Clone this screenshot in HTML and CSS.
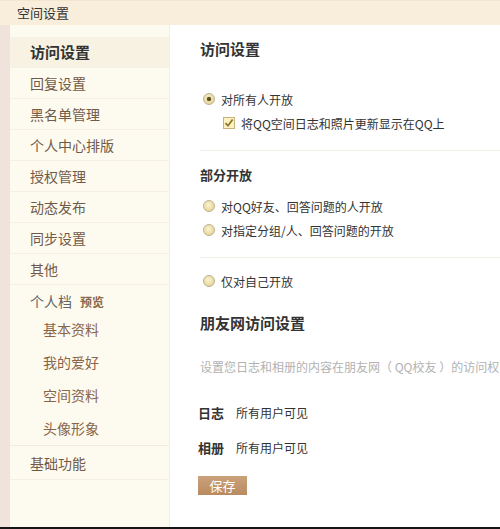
FILE: index.html
```html
<!DOCTYPE html>
<html lang="zh-CN">
<head>
<meta charset="utf-8">
<title>空间设置</title>
<link rel="stylesheet" href="styles.css">
</head>
<body>
<div class="page">
  <header class="top">空间设置</header>
  <div class="main">
    <aside class="side">
      <div class="item active">访问设置</div>
      <div class="item">回复设置</div>
      <div class="item">黑名单管理</div>
      <div class="item">个人中心排版</div>
      <div class="item">授权管理</div>
      <div class="item">动态发布</div>
      <div class="item">同步设置</div>
      <div class="item">其他</div>
      <div class="group">
        <div class="group-head">个人档<span class="preview">预览</span></div>
        <div class="sub">基本资料</div>
        <div class="sub">我的爱好</div>
        <div class="sub">空间资料</div>
        <div class="sub">头像形象</div>
      </div>
      <div class="item last">基础功能</div>
    </aside>
    <section class="content">
      <h2 class="title">访问设置</h2>
      <div class="row mt29"><span class="radio on"></span>对所有人开放</div>
      <div class="row cbrow mt4"><span class="check"><svg width="10" height="10" viewBox="0 0 10 10"><path d="M1.5 5.2 L4 7.8 L8.6 1.6" fill="none" stroke="#8a7420" stroke-width="1.7"/></svg></span>将QQ空间日志和照片更新显示在QQ上</div>
      <div class="rule mt17"></div>
      <h3 class="sub-title mt14">部分开放</h3>
      <div class="row mt11"><span class="radio"></span>对QQ好友、回答问题的人开放</div>
      <div class="row mt4"><span class="radio"></span>对指定分组/人、回答问题的开放</div>
      <div class="rule mt17"></div>
      <div class="row mt13"><span class="radio"></span>仅对自己开放</div>
      <h2 class="title mt21">朋友网访问设置</h2>
      <div class="desc mt23">设置您日志和相册的内容在朋友网（ QQ校友 ）的访问权限</div>
      <div class="row mt25"><b class="label">日志</b>所有用户可见</div>
      <div class="row mt15"><b class="label">相册</b>所有用户可见</div>
      <div class="mt19"><button class="save" type="button">保存</button></div>
    </section>
  </div>
</div>
</body>
</html>
```
FILE: styles.css
```css
* { box-sizing: border-box; }
html, body { margin: 0; padding: 0; }
body {
  font-family: "Noto Sans CJK SC", "Noto Sans", sans-serif;
  background: #ffffff;
  width: 500px;
  height: 529px;
  overflow: hidden;
}
.page {
  width: 500px;
  height: 529px;
  display: flex;
  flex-direction: column;
  border-bottom: 2px solid #151515;
}
.top {
  height: 25px;
  flex: none;
  background: #f9eedb;
  border-top: 1px solid #f3e6d0;
  color: #333;
  font-size: 13px;
  line-height: 24px;
  padding-left: 17px;
}
.main {
  flex: 1;
  display: flex;
  background: #efe3dc;
  padding-left: 10px;
  min-height: 0;
}
.side {
  width: 160px;
  flex: none;
  background: #fdfbef;
  border-right: 1px solid #f4efe2;
  padding-top: 12px;
}
.item {
  height: 31px;
  line-height: 30px;
  padding-left: 20px;
  font-size: 14px;
  color: #725a48;
  border-bottom: 1px solid #f5f0e3;
}
.item.active {
  background: #f8f2e2;
  color: #333;
  font-size: 15px;
  font-weight: bold;
}
.item.last {
  height: 34px;
  line-height: 34px;
}
.group {
  border-bottom: 1px solid #f2ecdc;
}
.group-head {
  height: 28px;
  padding-top: 4px;
  line-height: 24px;
  padding-left: 20px;
  font-size: 14px;
  color: #666;
}
.preview {
  font-size: 12px;
  font-weight: bold;
  color: #8b6a4c;
  margin-left: 8px;
}
.sub {
  height: 33px;
  line-height: 33px;
  padding-left: 33px;
  font-size: 14px;
  color: #8a6448;
}
.content {
  flex: 1;
  background: #ffffff;
  padding-left: 30px;
  padding-top: 13px;
  overflow: hidden;
  display: flex;
  flex-direction: column;
  color: #333;
}
.title {
  margin: 0;
  font-size: 15px;
  font-weight: bold;
  line-height: 22px;
  height: 22px;
  color: #333;
}
.sub-title {
  margin: 0;
  font-size: 13px;
  font-weight: bold;
  line-height: 20px;
  height: 20px;
  color: #333;
}
.row {
  display: flex;
  align-items: center;
  height: 20px;
  font-size: 12px;
  color: #333;
  white-space: nowrap;
}
.cbrow { padding-left: 20px; }
.radio {
  width: 12px;
  height: 12px;
  border-radius: 50%;
  margin-left: 3px;
  margin-right: 6px;
  border: 1px solid #bfb28f;
  background: radial-gradient(circle at 45% 40%, #fbf3cf 0%, #eadca6 60%, #d6c48c 100%);
  position: relative;
  flex: none;
}
.radio.on::after {
  content: "";
  position: absolute;
  left: 3px;
  top: 3px;
  width: 4px;
  height: 4px;
  border-radius: 50%;
  background: #5e4f22;
  box-shadow: 0 0 1px #5e4f22;
}
.check {
  width: 12px;
  height: 12px;
  flex: none;
  margin-left: 3px;
  margin-right: 6px;
  border: 1px solid #c5b27c;
  background: #fbf1c4;
  display: flex;
  align-items: center;
  justify-content: center;
}
.check svg { display: block; }
.rule {
  height: 1px;
  background: #f1ede2;
  flex: none;
}
.desc {
  height: 20px;
  line-height: 20px;
  font-size: 12px;
  color: #b2b2b2;
  white-space: nowrap;
}
.label {
  font-size: 13px;
  font-weight: bold;
  color: #333;
  margin-right: 12px;
  margin-left: -2px;
}
.save {
  width: 49px;
  height: 19px;
  margin-left: -2px;
  padding: 0;
  border: 0;
  background: linear-gradient(#cba27c, #b98a5f);
  color: #fff;
  font-family: "Noto Sans CJK SC", "Noto Sans", sans-serif;
  font-size: 13px;
  line-height: 19px;
  display: block;
}
.mt4 { margin-top: 4px; }
.mt11 { margin-top: 11px; }
.mt13 { margin-top: 13px; }
.mt14 { margin-top: 14px; }
.mt15 { margin-top: 15px; }
.mt17 { margin-top: 17px; }
.mt19 { margin-top: 19px; }
.mt21 { margin-top: 21px; }
.mt23 { margin-top: 23px; }
.mt25 { margin-top: 25px; }
.mt29 { margin-top: 29px; }
```
